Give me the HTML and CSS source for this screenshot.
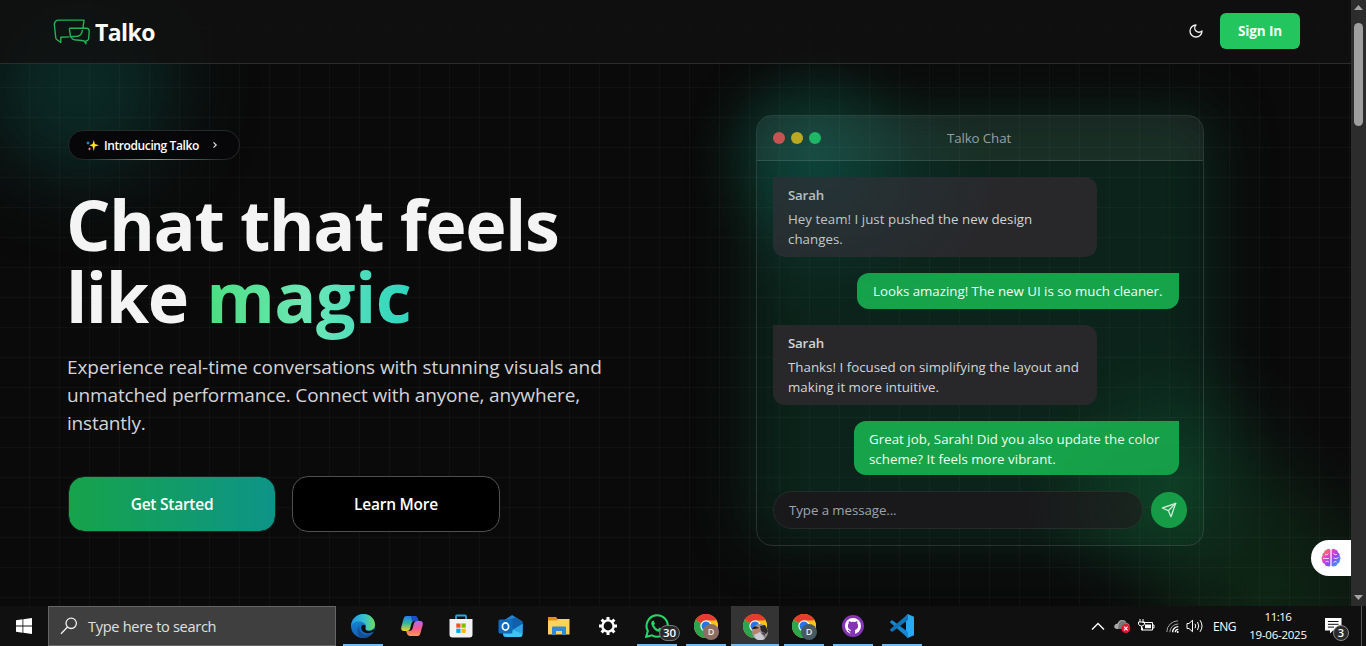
FILE: index.html
```html
<!DOCTYPE html>
<html lang="en">
<head>
<meta charset="utf-8">
<title>Talko</title>
<link rel="stylesheet" href="styles.css">
</head>
<body>
<svg class="defs" width="0" height="0" aria-hidden="true">
  <defs>
    <linearGradient id="edgeA" x1="0" y1="0" x2="1" y2="0"><stop offset="0" stop-color="#2196e0"/><stop offset=".55" stop-color="#35c1cf"/><stop offset="1" stop-color="#6edc5c"/></linearGradient>
    <linearGradient id="edgeB" x1="0" y1="0" x2="0" y2="1"><stop offset="0" stop-color="#1a8fe0"/><stop offset="1" stop-color="#0f5fb4"/></linearGradient>
    <linearGradient id="copA" x1="0" y1="0" x2="0" y2="1"><stop offset="0" stop-color="#1f7ff0"/><stop offset=".5" stop-color="#35b79b"/><stop offset="1" stop-color="#f3d31d"/></linearGradient>
    <linearGradient id="copB" x1="0" y1="0" x2="0" y2="1"><stop offset="0" stop-color="#b06af0"/><stop offset=".5" stop-color="#f2598e"/><stop offset="1" stop-color="#ff9a4d"/></linearGradient>
    <linearGradient id="brain" x1="0" y1="0" x2="1" y2="1"><stop offset="0" stop-color="#ff9a2e"/><stop offset=".35" stop-color="#ec3fc4"/><stop offset=".6" stop-color="#8b4cf0"/><stop offset="1" stop-color="#22b4ff"/></linearGradient>
    <symbol id="chrome" viewBox="0 0 24 24">
      <circle cx="12" cy="12" r="12" fill="#fcc419"/>
      <path d="M12 12L1.6 6A12 12 0 0 1 22.4 6z" fill="#e63b2e"/>
      <path d="M1.6 6A12 12 0 0 0 12 24L17.2 15 12 12z" fill="#2da44e"/>
      <path d="M12 6.4H22.6A12 12 0 0 1 12 24L17 15z" fill="#fcc419"/>
      <circle cx="12" cy="12" r="5.7" fill="#fff"/><circle cx="12" cy="12" r="4.5" fill="#2674e8"/>
    </symbol>
  </defs>
</svg>
<div class="screen">
  <div class="browser">
    <div class="page">
      <div class="glow glow-left"></div>
      <div class="glow glow-chat"></div>
      <div class="glow glow-teal"></div>
      <div class="glow glow-green"></div>
      <div class="glow glow-corner"></div>
      <header class="nav">
        <div class="brand">
          <svg width="38" height="28" viewBox="0 0 38 28" fill="none" stroke="#22b455" stroke-width="1.4" stroke-linejoin="round">
            <path d="M1.300 6Q2 2.200 5.500 2.100H31L29.900 10.300M16.500 18.900L7.800 19.300V24.500L3.400 21.200Q2.800 20.500 2.600 18.500L1.300 6"/>
            <path d="M16.300 10.300H34Q36.400 10.800 36.200 13.500L35.600 21Q35.400 22.500 32.900 23V25.700L30.800 22.700 21.500 21.700Q18.800 21.300 18.300 19.300M16.300 10.300L17.500 18.700 24.500 18.300Q28.700 17.600 29.400 12"/>
          </svg>
          <span class="brand-name">Talko</span>
        </div>
        <div class="nav-actions">
          <svg width="16" height="16" viewBox="0 0 24 24" fill="none" stroke="#f0f0f0" stroke-width="2" stroke-linecap="round" stroke-linejoin="round"><path d="M12 3a6 6 0 0 0 9 9 9 9 0 1 1-9-9Z"/></svg>
          <a class="signin">Sign In</a>
        </div>
      </header>
      <main class="hero">
        <section class="intro">
          <div class="pill">
            <svg width="13" height="13" viewBox="0 0 13 13"><path d="M7.800 1L8.900 5.100 13 6.300 8.900 7.500 7.800 12 6.600 7.500 3.400 6.300 6.600 5.100z" fill="#fde910"/><path d="M2 2l.6 1.400 1.500.6-1.500.6L2 6l-.6-1.400L0 4l1.400-.6z" fill="#35bdf2"/><path d="M3.500 8l.5 1.300 1.300.6-1.300.6-.5 1.300-.5-1.300L1.700 9.900 3 9.300z" fill="#f08ab8"/></svg>
            <span class="pill-text">Introducing Talko</span>
            <svg class="chev" width="6" height="8" viewBox="0 0 6 8" fill="none" stroke="#ddd" stroke-width="1.200"><path d="M1.500 1.300L4.200 4 1.500 6.700"/></svg>
          </div>
          <h1 class="title">Chat that feels<br>like <span class="magic">magic</span></h1>
          <p class="lead"><span class="l1">Experience real-time conversations with stunning visuals and</span><br><span class="l2">unmatched performance. Connect with anyone, anywhere,</span><br>instantly.</p>
          <div class="cta">
            <a class="btn btn-start">Get Started</a>
            <a class="btn btn-learn">Learn More</a>
          </div>
        </section>
        <section class="chat">
          <div class="chat-head">
            <div class="dots"><i class="dot red"></i><i class="dot yellow"></i><i class="dot green"></i></div>
            <span class="chat-title">Talko Chat</span>
          </div>
          <div class="messages">
            <div class="msg them"><b>Sarah</b><span class="m1">Hey team! I just pushed the new design<br>changes.</span></div>
            <div class="msg me one"><span class="m2">Looks amazing! The new UI is so much cleaner.</span></div>
            <div class="msg them"><b>Sarah</b><span class="m3">Thanks! I focused on simplifying the layout and<br>making it more intuitive.</span></div>
            <div class="msg me two"><span class="m4">Great job, Sarah! Did you also update the color<br>scheme? It feels more vibrant.</span></div>
          </div>
          <div class="composer">
            <div class="field">Type a message...</div>
            <div class="send"><svg width="16" height="16" viewBox="0 0 24 24" fill="none" stroke="#e8fff0" stroke-width="2" stroke-linecap="round" stroke-linejoin="round"><path d="m22 2-7 20-4-9-9-4Z"/><path d="M22 2 11 13"/></svg></div>
          </div>
          <div class="sheen"></div>
        </section>
      </main>
      <div class="assist">
        <svg width="20" height="20" viewBox="0 0 20 20"><path d="M9.400 1.500Q7 0 5.500 1.800 3 2 3 4.500 .8 5.500 1.500 8-.3 10 1.200 12 .8 15 3.500 15.800 4.500 18.700 7 18.300 8.500 19 9.400 17.800zM10.600 1.500Q13 0 14.500 1.800 17 2 17 4.500 19.200 5.500 18.500 8 20.300 10 18.800 12 19.200 15 16.500 15.800 15.500 18.700 13 18.300 11.500 19 10.600 17.800z" fill="url(#brain)"/><path d="M4 6.500Q6 7.500 7.500 5.500M2 10.500H8M4.500 14Q6 12.500 8 14M16 6.500Q14 7.500 12.500 5.500M12.500 10Q15 11.500 17.500 9.500M15.500 14Q14 12.500 12.500 14.500" stroke="#fff" stroke-opacity=".75" fill="none"/></svg>
      </div>
    </div>
    <div class="scrollbar">
      <svg width="9" height="5" viewBox="0 0 9 5"><path d="M4.500 0L9 5H0z" fill="#a3a3a3"/></svg>
      <div class="thumb"></div>
      <svg class="down" width="9" height="5" viewBox="0 0 9 5"><path d="M4.500 5L9 0H0z" fill="#a3a3a3"/></svg>
    </div>
  </div>

  <footer class="taskbar">
    <div class="start"><svg width="16" height="16" viewBox="0 0 16 16" fill="#fff"><path d="M0 2.200L6.500 1.300V7.600H0zM7.300 1.200L16 0V7.600H7.300zM0 8.400H6.500V14.700L0 13.800zM7.300 8.400H16V16L7.300 14.800z"/></svg></div>
    <div class="search">
      <svg width="18" height="18" viewBox="0 0 18 18" fill="none" stroke="#f0f0f0" stroke-width="1.300"><circle cx="11.200" cy="6.300" r="5.200"/><path d="M7.500 10L1 16.800"/></svg>
      <span>Type here to search</span>
    </div>
    <div class="apps">
      <div class="app open"><svg width="24" height="24" viewBox="0 0 24 24"><circle cx="12" cy="12" r="12" fill="url(#edgeB)"/><path d="M0 12C1 5 6 0 12.500 0 19 0 24 5 24 10.500 24 14.500 21 16.500 17.500 16.500 15 16.500 13.500 15.500 14.500 14 16 11.500 14 8.200 9.500 7.500 5 7 1.200 9 0 12z" fill="url(#edgeA)"/><path d="M9.500 10.500C7 13 8 18 12 20 16 22 20 20.500 22.500 18 20 22.500 15 24.500 11 23.800 6 22 4.500 15 9.500 10.500z" fill="#174f91"/><path d="M14.500 14Q14 16.500 17.500 17 21 17 23.600 14.500L22.800 17.500Q18 20.500 13.500 18.500 9 16 10.500 12 12 10 14.500 11.500z" fill="#101010"/></svg></div>
      <div class="app"><svg width="24" height="22" viewBox="0 0 24 22"><path d="M6.500 1H15Q17 1 17.700 4L18.500 6H14Q12 6 11.300 9L10 14Q9.500 16 7 16H4Q.5 16 1.300 12L3.500 4Q4.200 1 6.500 1z" fill="url(#copA)"/><path d="M17.500 21H9.500Q7.500 21 6.800 18L6 16H9Q12 16 12.700 13L14 8Q14.500 6 17 6H20Q23.500 6 22.700 10L20.500 18Q19.800 21 17.500 21z" fill="url(#copB)"/><path d="M11 1H15Q17 1 17.700 4L18.500 6H14Q12.500 6 12 7z" fill="#1c50c8"/></svg></div>
      <div class="app"><svg width="24" height="24" viewBox="0 0 24 24"><path d="M7 6V2.500Q7 1.500 8 1.500H16Q17 1.500 17 2.500V6" fill="none" stroke="#23a8e8" stroke-width="1.800"/><path d="M.5 5H23.500V20.500Q23.500 23.500 20.500 23.500H3.500Q.5 23.500 .5 20.500z" fill="#f2f2f2"/><path d="M7.300 9.500H11.500V13.700H7.300z" fill="#f25022"/><path d="M12.500 9.500H16.700V13.700H12.500z" fill="#7fba00"/><path d="M7.300 14.700H11.500V18.900H7.300z" fill="#00a4ef"/><path d="M12.500 14.700H16.700V18.900H12.500z" fill="#ffb900"/></svg></div>
      <div class="app"><svg width="25" height="24" viewBox="0 0 25 24"><path d="M5 7L14 1 24.500 7.500V12H5z" fill="#2485d0"/><path d="M7 7L18 3.500 24.500 8V12L12 19z" fill="#1060ae"/><path d="M5 13L15 16 24.500 10V20.500Q24.500 23 22 23H8Q5 23 5 20z" fill="#3cc4f3"/><path d="M15 16L24.500 10V20Z" fill="#2ba3e5"/><rect x=".5" y="5.500" width="14" height="14" rx="1.500" fill="#0f6cbd"/><ellipse cx="7.500" cy="12.500" rx="3.100" ry="3.600" fill="none" stroke="#fff" stroke-width="1.700"/></svg></div>
      <div class="app"><svg width="22" height="20" viewBox="0 0 22 20"><path d="M0 1H8L10 3.500V6H0z" fill="#dc9412"/><path d="M0 4.500H8.500L10 3H21.500V18.500H0z" fill="#ffd25e"/><path d="M4 19V11.500Q4 10.500 5 10.500H17Q18 10.500 18 11.500V19H14V15H8V19z" fill="#348ad0"/></svg></div>
      <div class="app"><svg width="20" height="20" viewBox="0 0 20 20" fill="none" stroke="#fff"><circle cx="10" cy="10" r="5.600" stroke-width="2.400"/><path d="M10 1V4M10 16V19M1 10H4M16 10H19M3.600 3.600L5.800 5.800M14.200 14.200L16.400 16.400M3.600 16.400L5.800 14.200M14.200 5.800L16.400 3.600" stroke-width="3"/></svg></div>
      <div class="app open"><svg width="24" height="24" viewBox="0 0 24 24"><path d="M1.200 22.800L2.800 17A10.700 10.700 0 1 1 7 21.300z" fill="#101010" stroke="#25d366" stroke-width="2.100"/><path d="M8.500 6.500L10 9.800 8.900 11.300Q10.300 14 13 15.200L14.500 13.600 17.700 15.100Q17.800 18 14.700 18 8.500 17 6.300 10.200 5.800 7 8.500 6.500z" fill="#25d366"/></svg><span class="badge count">30</span></div>
      <div class="app open"><svg width="24" height="24"><use href="#chrome"/></svg><span class="badge brown">D</span></div>
      <div class="app open active"><svg width="24" height="24"><use href="#chrome"/></svg><span class="badge photo"><svg width="16" height="16" viewBox="0 0 16 16"><circle cx="8" cy="8" r="8" fill="#9b9289"/><path d="M8 2L13 1 16 7 14 10 9 7z" fill="#2b2826"/><path d="M1 4Q4 1 7 4L7.500 9Q4 12 1.500 9z" fill="#bd8266"/><path d="M0 5Q2 0 7 4L3 5z" fill="#2d211e"/><path d="M2 11L8 8 13 15Q7 18 3 14z" fill="#c9cbd4"/><path d="M9 9L13 8 13 12z" fill="#49465d"/></svg></span></div>
      <div class="app open"><svg width="24" height="24"><use href="#chrome"/></svg><span class="badge slate">D</span></div>
      <div class="app open"><svg width="22" height="22" viewBox="0 0 22 22"><circle cx="11" cy="11" r="11" fill="#8534b4"/><circle cx="11" cy="11" r="8" fill="#fff"/><path d="M8.900 19V16.300Q6.500 16.700 5.800 14.800M8.900 14.900Q5.900 14 5.900 10.800 5.900 9.400 6.700 8.500 6.400 7.400 6.900 6.200 8 6.300 9.200 7.100 11 6.600 12.800 7.100 14 6.300 15.100 6.200 15.600 7.400 15.300 8.500 16.100 9.400 16.100 10.800 16.100 14 13.100 14.900V19H8.900z" fill="#8534b4"/><path d="M8.900 16.300Q6.900 16.700 6.100 15" fill="none" stroke="#8534b4"/></svg></div>
      <div class="app open"><svg width="24" height="24" viewBox="0 0 24 24"><path d="M17.500 0L24 2.700V21.300L17.500 24 16 22V2z" fill="#29a9f2"/><path d="M0 8L2 6 18 18V24L.2 8.500z" fill="#1687d2"/><path d="M0 16L2 18 18 6V0L0 15.500z" fill="#1074bb"/></svg></div>
    </div>
    <div class="tray">
      <svg width="14" height="9" viewBox="0 0 14 9" fill="none" stroke="#fff" stroke-width="1.400"><path d="M1 7.500L7 1.500 13 7.500"/></svg>
      <svg class="cloud" width="17" height="14" viewBox="0 0 17 14"><path d="M3 10Q0 9.500 .2 7 .8 4.500 3.500 4.500 5 .5 8.500 1 11.500 1 12.500 4 16 4.500 15.500 8L13 10z" fill="#aaa"/><path d="M5 4Q8 0 11 3L15 6 9 10H4z" fill="#777"/><circle cx="11.800" cy="9.500" r="4.500" fill="#df1830"/><path d="M10 7.700L13.600 11.300M13.600 7.700L10 11.300" stroke="#fff" stroke-width="1.200"/></svg>
      <svg class="battery" width="17" height="14" viewBox="0 0 17 14"><path d="M4.500 3.500H14.500V11H4.500V8.500M14.500 6H16V9H14.500M2 0V3M5 0V3M.5 3H6.500V5Q6 7 3.500 7 1 7 .5 5zM3.500 7V11H5" fill="none" stroke="#fff"/><path d="M7 5.500H13V9.200H7z" fill="#fff"/></svg>
      <svg class="wifi" width="13" height="13" viewBox="0 0 13 13" fill="none"><path d="M.8 12A11.300 11.300 0 0 1 12 .8M3.800 12.300A8.500 8.500 0 0 1 12.300 4" stroke="#a3a3a3"/><path d="M6.600 12.300A5.700 5.700 0 0 1 12.300 6.600M9.300 12.300A3 3 0 0 1 12.300 9.300" stroke="#fff" stroke-width="1.300"/><circle cx="11.700" cy="11.900" r="1" fill="#fff"/></svg>
      <svg class="volume" width="18" height="14" viewBox="0 0 18 14" fill="none" stroke="#fff"><path d="M1 4.500H3L6.500 1.300V12.700L3 9.500H1zM9 4.800Q10.500 7 9 9.200M11.500 3Q14 7 11.500 11M14 1.200Q18 7 14 12.800"/></svg>
      <span class="lang">ENG</span>
      <div class="clock"><span>11:16</span><span class="date">19-06-2025</span></div>
      <div class="notify"><svg width="17" height="16" viewBox="0 0 17 16"><path d="M0 0H16.500V12.500H8L5 15.500V12.500H0z" fill="#fff"/><path d="M3 3.500H13.500M3 6.300H13.500M3 9.100H9" stroke="#101010"/></svg><span class="badge three">3</span></div>
      <div class="desktop-edge"></div>
    </div>
  </footer>
</div>
</body>
</html>
```
FILE: styles.css
```css
* { box-sizing: border-box; }
body { margin: 0; background: #0a0a0a; font-family: "Open Sans", "Noto Sans", sans-serif; color: #fff; overflow: hidden; }
svg { display: block; flex: none; }
.defs { position: absolute; }
.screen { width: 1366px; height: 646px; display: flex; flex-direction: column; }
.browser { height: 606px; display: flex; }
.page {
  position: relative; isolation: isolate; width: 1351px; height: 606px; overflow: hidden;
  display: flex; flex-direction: column; background-color: #0a0a0a;
}
.page::before {
  content: ""; position: absolute; inset: 0; z-index: -1;
  background-image:
    linear-gradient(to right, rgba(255,255,255,.026) 1px, transparent 1px),
    linear-gradient(to bottom, rgba(255,255,255,.026) 1px, transparent 1px);
  background-size: 30px 30px; background-position: 29px 27px;
}
.glow { position: absolute; z-index: -2; pointer-events: none; }
.glow-left { left: -15px; top: -10px; width: 190px; height: 190px; border-radius: 50%; background: #0b2925; filter: blur(38px); }
.glow-chat { left: 748px; top: 107px; width: 470px; height: 438px; border-radius: 30px; background: #0b231a; filter: blur(26px); }
.glow-teal { left: 690px; top: 30px; width: 250px; height: 250px; background: radial-gradient(closest-side, rgba(11,70,58,.7), rgba(11,66,52,.4) 45%, rgba(11,60,48,.1) 78%, transparent); }
.glow-green { left: 1020px; top: 330px; width: 310px; height: 310px; background: radial-gradient(closest-side, rgba(14,68,42,.6), rgba(14,62,40,.38) 45%, rgba(14,56,36,.1) 78%, transparent); }
.glow-corner { left: 1110px; top: 430px; width: 320px; height: 320px; background: radial-gradient(closest-side, rgba(16,54,26,.6), rgba(16,50,26,.42) 45%, rgba(16,48,26,.12) 78%, transparent); }

.nav {
  height: 64px; flex: none; display: flex; align-items: center; justify-content: space-between;
  padding: 0 51px 2px 53px; background: rgba(17,17,17,.85); border-bottom: 1px solid #2a2d2c;
}
.brand { display: flex; align-items: center; gap: 4px; padding-top: 3px; }
.brand-name { font-size: 23px; line-height: 30px; font-weight: 700; letter-spacing: -.55px; color: #fafafa; }
.nav-actions { display: flex; align-items: center; gap: 16px; }
.signin {
  width: 80px; height: 36px; border-radius: 6px; background: #22c55e; color: #f5fff8;
  font-size: 13.500px; font-weight: 700; line-height: 36px; text-align: center; letter-spacing: -.1px;
}

.hero { display: flex; align-items: flex-start; gap: 113px; padding: 51px 0 0 68px; }
.intro { width: 575px; padding-top: 15px; }
.pill {
  width: 172px; height: 30px; border-radius: 15px; border: 1px solid #252927; background: #07070a;
  display: flex; align-items: center; padding: 0 17px; position: relative;
}
.pill::after {
  content: ""; position: absolute; left: 18px; right: 18px; bottom: -1px; height: 1px;
  background: linear-gradient(to right, transparent, #34c78d, transparent);
}
.pill-text { margin-left: 5px; font-size: 12px; font-weight: 600; letter-spacing: -.4px; white-space: nowrap; }
.chev { margin-left: 13px; }
.title { margin: 28px 0 0 -2px; font-size: 70px; line-height: 72px; font-weight: 700; color: #f4f4f5; white-space: nowrap; letter-spacing: -1.500px; }
.magic { margin-left: 2px; letter-spacing: -.6px; background: linear-gradient(to right, #4ade80, #6ee7b7 50%, #2dd4bf); -webkit-background-clip: text; background-clip: text; color: transparent; }
.lead { margin: 21px 0 0 -1px; font-size: 19px; line-height: 28px; color: #d4d4d8; white-space: nowrap; letter-spacing: -.2px; }
.l1 { letter-spacing: -.07px; }
.l2 { letter-spacing: -.13px; }
.cta { display: flex; gap: 16px; margin-top: 39px; }
.btn { width: 208px; height: 56px; border-radius: 16px; font-size: 15.500px; font-weight: 600; line-height: 54px; text-align: center; letter-spacing: -.24px; }
.btn-start { border: 1px solid #17231e; background: linear-gradient(to right, #16a34a, #0d9488) padding-box; }
.btn-learn { border: 1px solid #505050; background: #000; }

.chat {
  position: relative; width: 448px; height: 431px; border: 1px solid rgba(255,255,255,.13);
  border-radius: 16px; overflow: hidden;
}
.chat-head { position: relative; height: 45px; display: flex; align-items: center; padding: 0 16px; background: rgba(255,255,255,.06); border-bottom: 1px solid rgba(255,255,255,.13); }
.dots { display: flex; gap: 6px; }
.dot { width: 12px; height: 12px; border-radius: 50%; }
.red { background: #de5150; }
.yellow { background: #d6b318; }
.green { background: #20c464; }
.chat-title { flex: 1; margin-right: 50px; text-align: center; font-size: 13.300px; color: #9b9fa4; letter-spacing: -.1px; }
.messages { display: flex; flex-direction: column; gap: 16px; height: 314px; padding: 16px 24px 0 16px; overflow: hidden; }
.msg { font-size: 13.300px; line-height: 20px; white-space: nowrap; border-radius: 12px; flex: none; }
.msg b { display: block; font-weight: 600; margin-bottom: 4px; letter-spacing: -.2px; }
.them { width: 324px; height: 80px; padding: 8px 15px; background: #28282b; border-top-left-radius: 0; color: #d4d4d8; }
.me { align-self: flex-end; background: #16a34a; border-top-right-radius: 0; padding: 8px 16px; color: #effff4; font-weight: 500; }
.one { width: 322px; height: 36px; }
.two { width: 325px; height: 54px; padding-left: 15px; }
.m1 { letter-spacing: .03px; }
.m2 { letter-spacing: -.01px; }
.m3 { letter-spacing: .02px; }
.m4 { letter-spacing: .03px; }
.composer { display: flex; align-items: center; gap: 8px; padding: 16px; }
.field { width: 370px; height: 38px; flex: none; border: 1px solid #29292d; border-radius: 19px; background: #19191b; padding-left: 15px; line-height: 36px; font-size: 13.300px; letter-spacing: -.08px; color: #9ca3af; }
.send { width: 36px; height: 36px; flex: none; border-radius: 50%; background: #16a34a; display: grid; place-items: center; }
.sheen {
  position: absolute; inset: 0; pointer-events: none;
  background:
    radial-gradient(180px 140px at 60px 60px, rgba(20,100,100,.2), transparent),
    radial-gradient(130px 110px at 400px 390px, rgba(20,110,50,.16), transparent);
}
.assist { position: absolute; right: 0; top: 540px; width: 40px; height: 36px; border-radius: 18px 0 0 18px; background: #fff; display: flex; align-items: center; padding-left: 10px; }

.scrollbar { width: 15px; background: #2c2c2c; display: flex; flex-direction: column; align-items: center; padding: 5px 0 6px; }
.thumb { width: 9px; height: 103px; margin-top: 13px; border-radius: 5px; background: #9f9f9f; }
.down { margin-top: auto; }

.taskbar { height: 40px; background: #101010; display: flex; }
.start { width: 48px; display: grid; place-items: center; }
.search { width: 288px; border: 1px solid #656565; background: #3f3f3f; display: flex; align-items: center; gap: 10px; padding-left: 11px; font-size: 14.600px; letter-spacing: -.32px; color: #e0e0e0; }
.apps { display: flex; gap: 1px; margin-left: 3px; }
.app { position: relative; width: 48px; height: 40px; display: grid; place-items: center; }
.open::after { content: ""; position: absolute; left: 4px; right: 4px; bottom: 0; height: 2px; background: #76b9ed; }
.active { background: #343434; }
.active::after { left: 0; right: 0; }
.badge { position: absolute; left: 21px; top: 18px; width: 16px; height: 16px; border-radius: 50%; font-size: 9px; font-weight: 600; line-height: 16px; text-align: center; color: #f0e8e5; }
.brown { background: #8d6e63; }
.slate { background: #455a64; }
.count { left: 26px; top: 19px; width: 21px; height: 16px; line-height: 14px; border-radius: 8px; border: 1px solid #777; background: #2b2b2b; font-size: 11.500px; color: #fff; }
.tray { margin-left: auto; display: flex; align-items: center; }
.cloud { margin-left: 9px; }
.battery { margin-left: 7px; }
.wifi { margin-left: 11px; }
.volume { margin-left: 7px; }
.lang { width: 24px; margin-left: 9px; font-size: 12px; letter-spacing: -.45px; }
.clock { width: 60px; margin-left: 11px; display: flex; flex-direction: column; align-items: center; font-size: 11.500px; line-height: 18px; letter-spacing: -.5px; white-space: nowrap; }
.date { letter-spacing: -.25px; }
.notify { position: relative; width: 24px; margin-left: 17px; }
.three { left: 8px; top: 7px; width: 16px; height: 16px; line-height: 14px; background: #2b2b2b; border: 1px solid #888; color: #fff; font-size: 11px; }
.desktop-edge { width: 5px; height: 40px; margin-left: 12px; border-left: 1px solid #555; }
```
